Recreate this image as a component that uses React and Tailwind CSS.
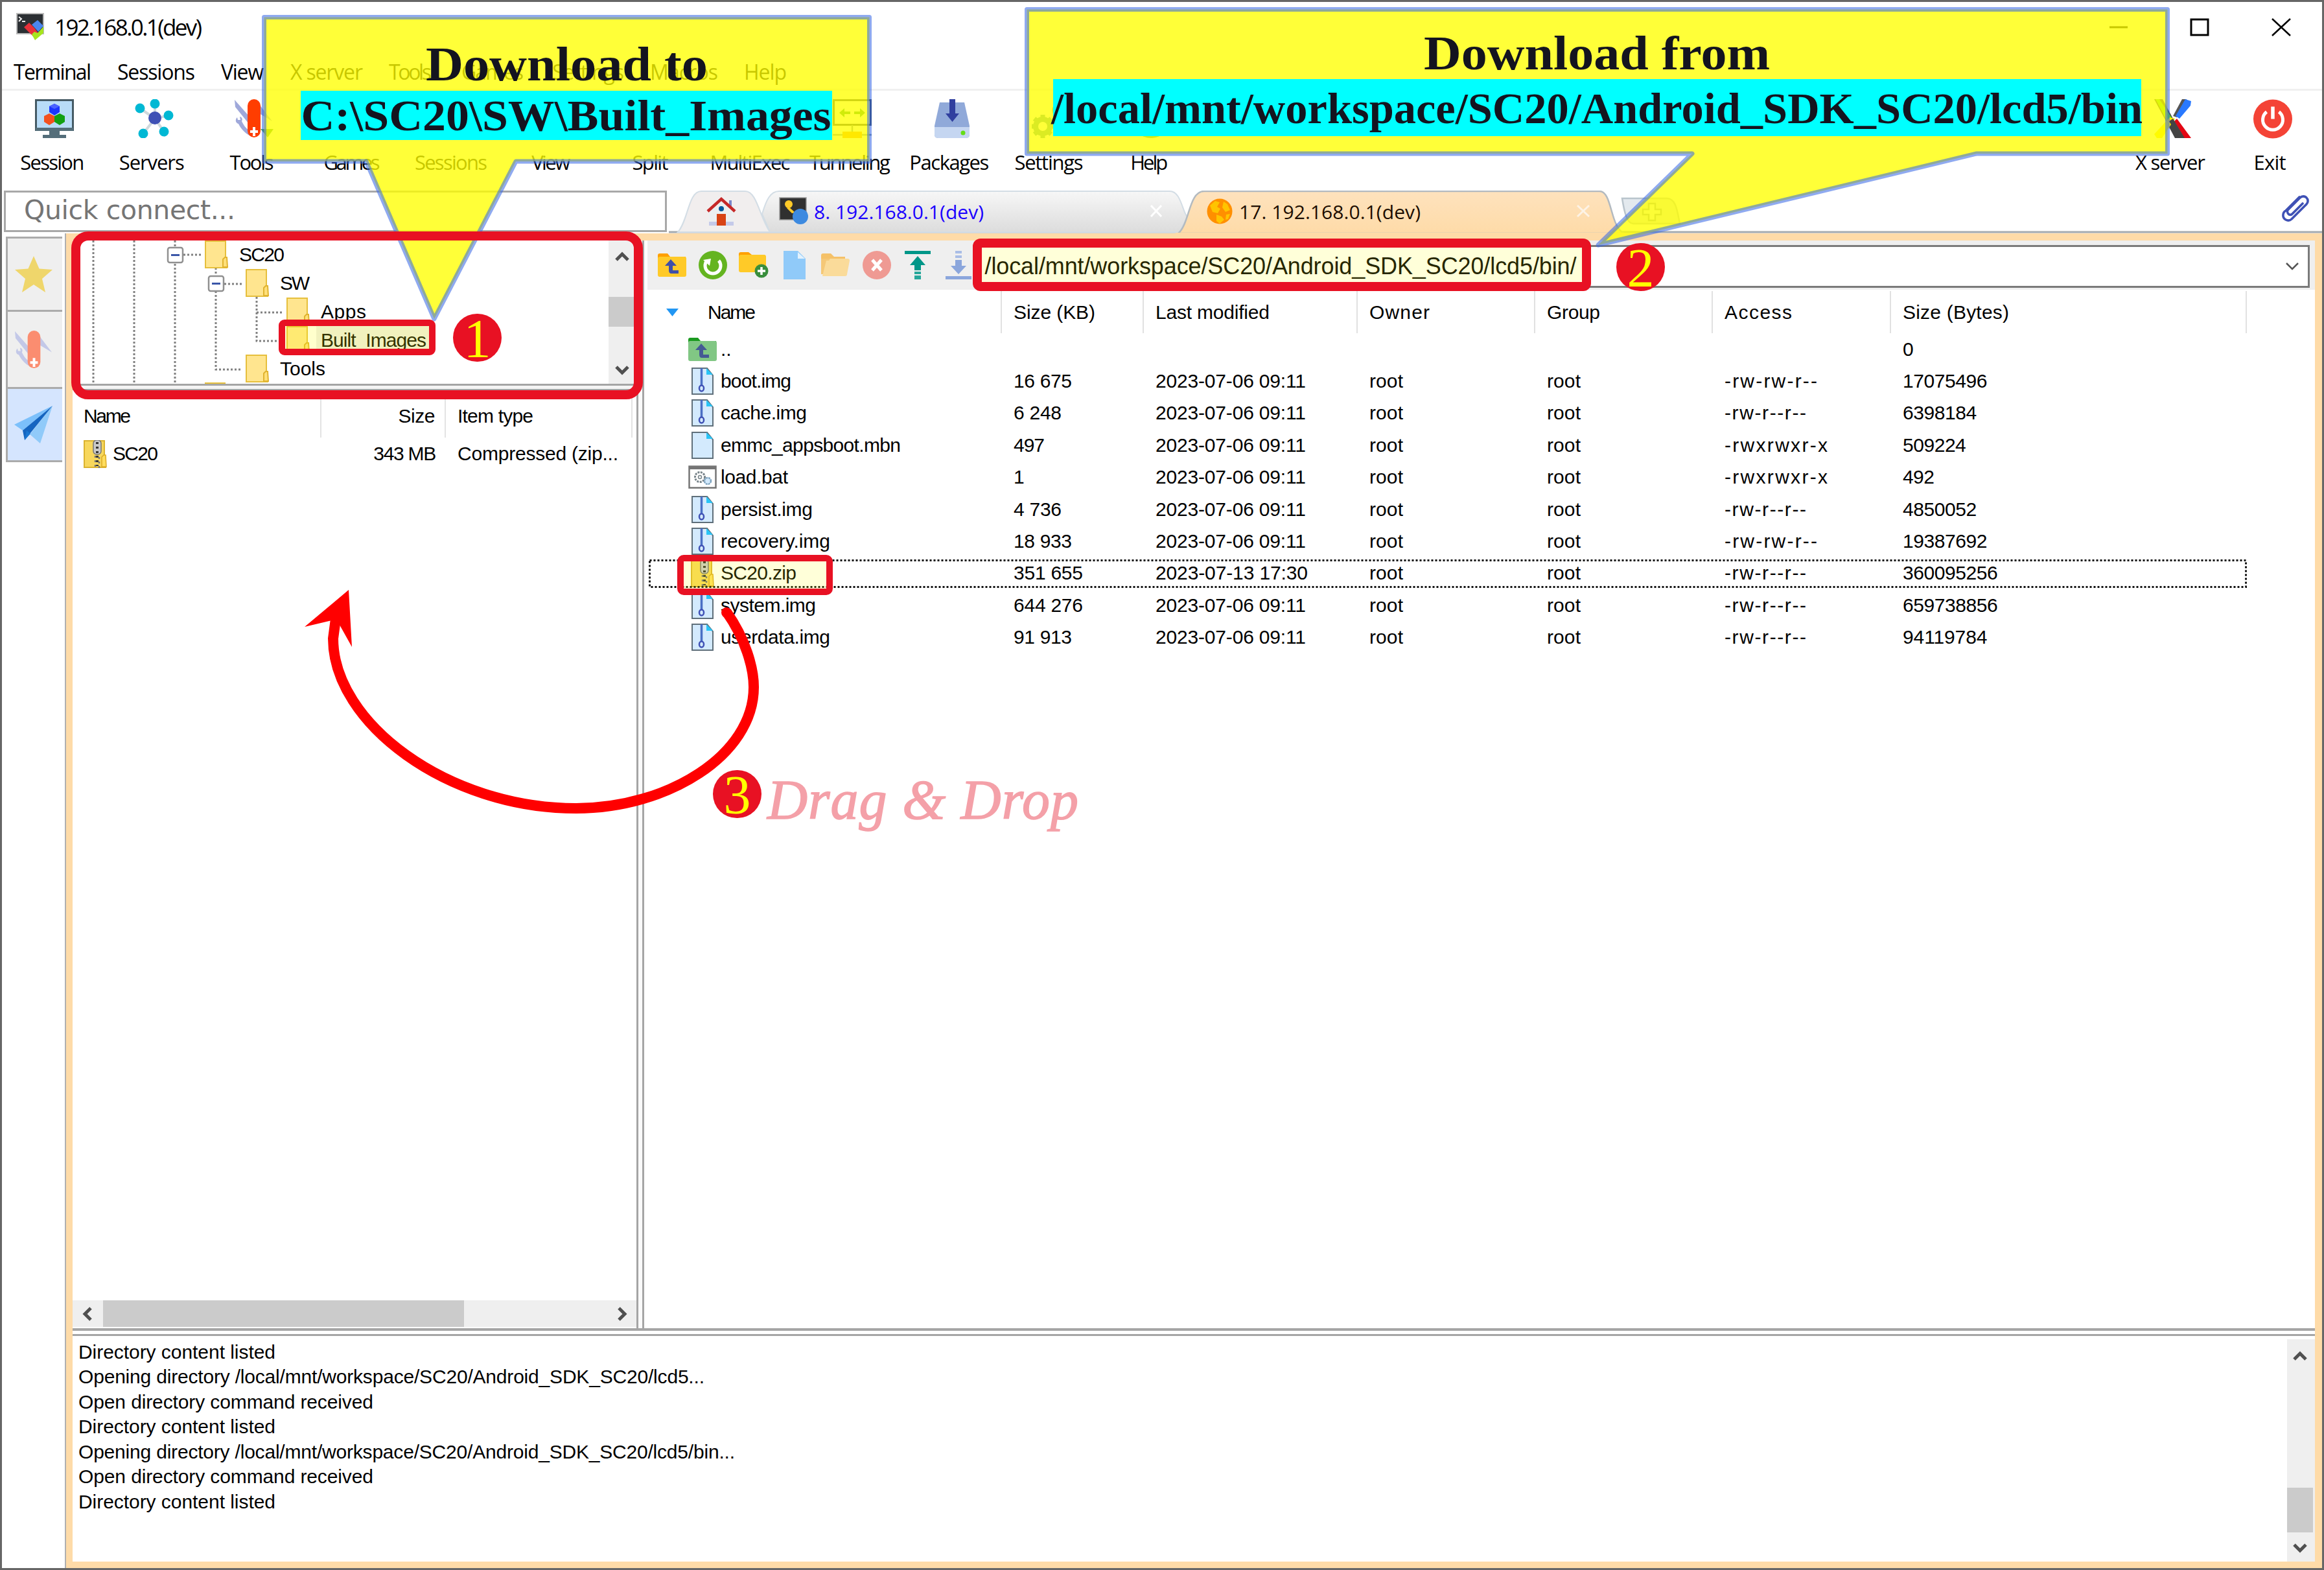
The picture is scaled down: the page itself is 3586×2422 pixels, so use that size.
import { useLayoutEffect, useRef } from "react";

const SANS = "font-['Liberation_Sans',Arial,sans-serif]";
const UI = "font-['Open_Sans','Noto_Sans',sans-serif]";
const SERIF = "font-['Liberation_Serif','Times_New_Roman',serif]";

/* Single-line label that spans `w` pixels, by tracking or, with `stretch`, by widening the glyphs. */
function Fit({ w, stretch, className = "", children }) {
  const ref = useRef(null);
  useLayoutEffect(() => {
    const el = ref.current;
    if (!w || !el) return;
    el.style.letterSpacing = "0px";
    el.style.transform = "none";
    const natural = el.getBoundingClientRect().width;
    if (stretch) {
      el.style.transform = `scaleX(${w / natural})`;
      return;
    }
    const n = Math.max(1, el.textContent.length - 1);
    el.style.letterSpacing = `${(w - natural) / n}px`;
  }, [w, stretch, children]);
  return (
    <span ref={ref} className={`inline-block whitespace-pre ${className}`}>
      {children}
    </span>
  );
}

/* ---------- icons ---------- */

const AppIcon = () => (
  <svg width="44" height="43" viewBox="0 0 44 43">
    <rect x="1" y="1" width="41" height="31" fill="#2b2f33" stroke="#b9b9b9" strokeWidth="2" />
    <path d="M4 6l4 3-4 4M9 13h5" stroke="#eee" strokeWidth="2" fill="none" />
    <path d="M12 22l8-7 8 8 6 8-6 7z" fill="#e8303a" />
    <path d="M24 18l9-7 9 9-8 9z" fill="#4a86ee" />
    <path d="M42 21v10L29 42l-5-9 4-4 5 2z" fill="#a6e51e" />
  </svg>
);

const SessionIcon = () => (
  <svg width="60" height="60" viewBox="0 0 60 60">
    <rect x="1.5" y="1.5" width="57" height="46" fill="#b8dcf7" stroke="#455a64" strokeWidth="3" />
    <path d="M1 44h58v5H1z" fill="#546e7a" />
    <path d="M22 49h16v6H22zM12 55h36v5H12z" fill="#546e7a" />
    <path d="M30 7l8 4v9l-8 5-8-5v-9z" fill="#1a35ff" />
    <path d="M22 22l8 4v9l-8 5-8-5v-9z" fill="#f4511e" />
    <path d="M38 22l8 4v9l-8 5-8-5v-9z" fill="#12a012" />
    <path d="M30 7l8 4-8 4-8-4z" fill="#4a63ff" />
  </svg>
);

const ServersIcon = () => (
  <svg width="60" height="60" viewBox="0 0 60 60">
    <path d="M31 30L31 8M31 30L8 14M31 30l21-5M31 30L13 53M31 30l14 20" stroke="#cfd8dc" strokeWidth="4" />
    <circle cx="31" cy="29" r="10" fill="#3f51b5" />
    <circle cx="31" cy="7" r="7.5" fill="#00b8d4" />
    <circle cx="8" cy="14" r="7.5" fill="#00b8d4" />
    <circle cx="52" cy="25" r="7.5" fill="#00b8d4" />
    <circle cx="13" cy="53" r="7.5" fill="#00b8d4" />
    <circle cx="45" cy="50" r="7.5" fill="#00b8d4" />
  </svg>
);

const KnifeIcon = ({ size = 60, red = "#ff3d00", blue = "#9fa8da" }) => (
  <svg width={size} height={size} viewBox="0 0 60 60">
    <path d="M0 1l22 25v12L1 12z" fill={blue} />
    <path d="M58 34L38 8v14z" fill={blue} />
    <path d="M4 28c-4 4-2 9 2 10 4 8 10 14 17 18v-8c-6-3-9-8-12-14 2-3 0-7-3-7l1 5-4 0z" fill={blue} />
    <path d="M40 46h20l-9 13z" fill="#4aa52e" opacity={size === 60 ? 1 : 0} />
    <rect x="20" y="0" width="20" height="59" rx="10" fill={red} />
    <path d="M28 43h4v5h4v4h-4v5h-4v-5h-4v-4h4z" fill="#fff" />
  </svg>
);

const TunnelIcon = () => (
  <svg width="60" height="60" viewBox="0 0 60 60">
    <rect x="1.5" y="1.5" width="57" height="38" fill="#fff" stroke="#37474f" strokeWidth="3" />
    <path d="M10 21l8-7v5h9v4h-9v5zM50 21l-8-7v5h-9v4h9v5z" fill="#2ea52e" />
    <path d="M30 40v14M0 55h60" stroke="#78909c" strokeWidth="2.5" />
    <rect x="15" y="50" width="30" height="10" fill="#ff9800" />
  </svg>
);

const PackagesIcon = () => (
  <svg width="60" height="60" viewBox="0 0 60 60">
    <path d="M11 5h38l8 36v14a5 5 0 01-5 5H8a5 5 0 01-5-5V41z" fill="#90a9d9" />
    <path d="M3 43h54v12a5 5 0 01-5 5H8a5 5 0 01-5-5z" fill="#c5d6f1" />
    <path d="M26 0h9v22h6L30.500 35 20 22h6z" fill="#303f9f" />
    <circle cx="47" cy="52" r="3.500" fill="#64dd17" />
  </svg>
);

const GearIcon = () => (
  <svg width="60" height="60" viewBox="0 0 60 60">
    <circle cx="17" cy="42" r="11" fill="none" stroke="#5aa5a0" strokeWidth="8" />
    <path d="M17 24v7M17 53v7M0 42h6M28 42h6M4 30l5 4M25 50l5 4M30 30l-5 4M9 50l-5 4" stroke="#5aa5a0" strokeWidth="7" />
    <circle cx="44" cy="17" r="9" fill="none" stroke="#607d8b" strokeWidth="7" />
  </svg>
);

const HelpIcon = () => (
  <svg width="60" height="60" viewBox="0 0 60 60">
    <circle cx="30" cy="30" r="30" fill="#43a047" />
  </svg>
);

const XServerIcon = () => (
  <svg width="60" height="60" viewBox="0 0 60 60">
    <path d="M1 0h13l32 60H33z" fill="#444" />
    <path d="M3 0h6l20 30-7 6z" fill="#64dd17" />
    <path d="M33 30l-8-2-24 26 4 6h8z" fill="#ffeb00" />
    <path d="M44 0h7L36 28l-6-2z" fill="#555" />
    <path d="M49 0l9 3-1 7-17 20-6-4z" fill="#2979ff" />
    <path d="M36 30l22 30H47L32 34z" fill="#e30613" />
    <path d="M30 30l18 30h-9L24 34z" fill="#444" />
  </svg>
);

const ExitIcon = () => (
  <svg width="61" height="61" viewBox="0 0 60 60">
    <circle cx="30" cy="30" r="30" fill="#f44336" />
    <path d="M20.500 19a15.500 15.500 0 1019 0" fill="none" stroke="#fff" strokeWidth="5" />
    <path d="M30 11v19" stroke="#fff" strokeWidth="5.500" />
  </svg>
);

const HomeIcon = () => (
  <svg width="46" height="46" viewBox="0 0 46 46">
    <path d="M35 6h4v14h-4z" fill="#7986cb" />
    <path d="M4 22L23 4l19 18v22H4z" fill="#eceff1" />
    <path d="M4 39h38v6H4z" fill="#c5cae9" />
    <path d="M2 23L23 4l21 19" stroke="#c62828" strokeWidth="4.500" fill="none" />
    <circle cx="23" cy="19" r="4" fill="#01579b" />
    <rect x="16" y="27" width="14" height="18" fill="#d84315" />
  </svg>
);

const KeyTermIcon = () => (
  <svg width="46" height="44" viewBox="0 0 46 44">
    <rect x="1" y="1" width="41" height="34" fill="#303030" stroke="#999" strokeWidth="1.500" />
    <circle cx="15" cy="11" r="6" fill="#ffca28" />
    <path d="M15 15l10 9-5 1-8-8z" fill="#ffca28" />
    <circle cx="33" cy="30" r="12" fill="#3d8ae0" />
  </svg>
);

const GlobeIcon = () => (
  <svg width="40" height="42" viewBox="0 0 40 42">
    <circle cx="20" cy="21" r="19.500" fill="#ff8f00" />
    <path d="M5 12l8-7 7 2-4 7 5 3-4 7-8-2zM15 26l8 3 4 5-7 6-5-4zM26 6l6 4 4 9-7 3-5-7zM30 26l6-1-3 8-4 1z" fill="#ffc400" />
  </svg>
);

const ClipIcon = () => (
  <svg width="48" height="48" viewBox="0 0 48 48">
    <path
      d="M30 6L9 27a8 8 0 000 14 8 8 0 009-1L41 17a7 7 0 000-10 7 7 0 00-10 0L13 25a5 5 0 000 7 4 4 0 006 0l16-16"
      fill="none" stroke="#3f51b5" strokeWidth="3.600" strokeLinecap="round"
    />
  </svg>
);

const StarIcon = () => (
  <svg width="60" height="60" viewBox="0 0 60 60">
    <path d="M30 2l8.500 19.500L59 23 43 37l5 21-18-12-18 12 5-21L1 23l20.500-1.500z" fill="#efd66b" />
  </svg>
);

const PlaneIcon = () => (
  <svg width="60" height="60" viewBox="0 0 60 60">
    <path d="M59 1L0 30l13 9z" fill="#7cc0fb" />
    <path d="M59 1L24 45l16 14z" fill="#90caf9" />
    <path d="M59 1L13 39l3 15z" fill="#1565c0" />
    <path d="M16 54l9-10-6-5z" fill="#1976d2" />
  </svg>
);

const Folder = () => (
  <svg width="36" height="43" viewBox="0 0 36 43" className="shrink-0">
    <path d="M1 1h31v26h2v15H1z" fill="#ffe58f" stroke="#e6bf3c" strokeWidth="2" />
    <path d="M28 41V29l3-3h3l1 15z" fill="#ffe07a" stroke="#e0b32f" strokeWidth="2" />
  </svg>
);

const ZipFolder = () => (
  <svg width="36" height="43" viewBox="0 0 36 43" className="shrink-0">
    <path d="M1 1h31v26h2v15H1z" fill="#f7d75c" stroke="#dbb32f" strokeWidth="2" />
    <path d="M28 41V26l3-3h3l1 18z" fill="#ffdd5e" stroke="#dbab25" strokeWidth="1.500" />
    <rect x="15" y="0" width="12" height="22" rx="5" fill="#c9c9c9" stroke="#777" strokeWidth="1.500" />
    <path d="M21 3v37" stroke="#333" strokeWidth="4" strokeDasharray="3 4" />
    <path d="M18 24v19M24 26v17" stroke="#777" strokeWidth="2.500" strokeDasharray="3 4" />
  </svg>
);

const FileIcon = ({ zip }) => (
  <svg width="36" height="44" viewBox="0 0 36 44">
    <path d="M2 2h23l9 11v29H2z" fill="#d3eafd" stroke="#5f6f7a" strokeWidth="2" />
    <path d="M24 2v10h10z" fill="#29c4f6" />
    {zip && <path d="M16.500 2v26" stroke="#4a6fc4" strokeWidth="3.500" />}
    {zip && <ellipse cx="16.500" cy="33" rx="3.500" ry="4.500" fill="none" stroke="#3f51b5" strokeWidth="2.500" />}
  </svg>
);

const BatIcon = () => (
  <svg width="44" height="36" viewBox="0 0 44 36">
    <rect x="1.500" y="1.500" width="41" height="33" fill="#fff" stroke="#757575" strokeWidth="2.500" />
    <path d="M1 1h42v5H1z" fill="#757575" />
    <circle cx="18" cy="18" r="7.500" fill="none" stroke="#78848a" strokeWidth="3" strokeDasharray="3 1.500" />
    <circle cx="18" cy="18" r="2.500" fill="none" stroke="#78848a" strokeWidth="1.500" />
    <circle cx="30" cy="24" r="5" fill="#d3eafd" stroke="#7fa4c0" strokeWidth="2.500" strokeDasharray="3 1" />
  </svg>
);

const UpFolder = ({ body, tab, arrow = "#3f4fa8" }) => (
  <svg width="44" height="38" viewBox="0 0 44 38">
    <path d="M0 4q0-3 3-3h12l4 5h24v8H0z" fill={tab} />
    <rect x="0" y="6" width="44" height="31" rx="3" fill={body} />
    <path d="M20 10l9 10h-6v7h9v5H21q-4 0-4-5v-7h-6z" fill={arrow} />
  </svg>
);

const toolIcons = [
  <UpFolder body="#ffca28" tab="#ffa000" />,
  <svg width="44" height="44" viewBox="0 0 44 44">
    <circle cx="22" cy="22" r="22" fill="#64b420" />
    <path d="M13 15a12 12 0 1018 0" fill="none" stroke="#fff" strokeWidth="5" />
    <path d="M7 14l12-2-2 11z" fill="#fff" />
  </svg>,
  <svg width="46" height="40" viewBox="0 0 46 40">
    <path d="M0 3q0-3 3-3h12l5 4h20v10H0z" fill="#ffa000" />
    <rect x="0" y="4" width="42" height="27" rx="3" fill="#ffca28" />
    <circle cx="35" cy="29" r="10.500" fill="#388e3c" />
    <path d="M35 23v12M29 29h12" stroke="#fff" strokeWidth="3.500" />
  </svg>,
  <svg width="36" height="44" viewBox="0 0 36 44">
    <path d="M1 0h22l12 12v32H1z" fill="#90caf9" />
    <path d="M23 2v10h11z" fill="#e3f2fd" />
  </svg>,
  <svg width="46" height="36" viewBox="0 0 46 36">
    <path d="M1 3q0-3 3-3h12l5 5h17v10H1z" fill="#f5c168" />
    <path d="M1 8h38v24H1z" fill="#f5c877" />
    <path d="M9 11h4l2-3h27q3 0 3 3l-4 21q0 3-3 3H3z" fill="#fadb9a" />
  </svg>,
  <svg width="44" height="44" viewBox="0 0 44 44">
    <circle cx="22" cy="22" r="22" fill="#ef9a93" />
    <path d="M15 14l14 16M29 14L15 30" stroke="#fff" strokeWidth="5" />
  </svg>,
  <svg width="40" height="44" viewBox="0 0 40 44">
    <path d="M0 0h40v5H0z" fill="#009688" />
    <path d="M20 8l12 14h-7v8H15v-8H8z" fill="#009688" />
    <path d="M15 32h10v4H15zM15 38h10v6H15z" fill="#26a69a" />
  </svg>,
  <svg width="40" height="44" viewBox="0 0 40 44">
    <path d="M0 39h40v5H0z" fill="#8ba6dc" />
    <path d="M20 36L8 23h7v-9h10v9h7z" fill="#8ba6dc" />
    <path d="M15 0h10v4H15zM15 7h10v4H15z" fill="#a9bde6" />
  </svg>,
];

const Chevron = ({ className = "", thin }) => (
  <svg width="22" height="16" viewBox="0 0 22 16" className={className}>
    <path d="M2 13L11 4l9 9" fill="none" stroke={thin ? "#555" : "#505050"} strokeWidth={thin ? 2.5 : 5} />
  </svg>
);

/* ---------- data ---------- */

const menus = [
  ["Terminal", 120, "w-[160px]"],
  ["Sessions", 120, "w-[160px]"],
  ["View", 66, "w-[107px]"],
  ["X server", 112, "w-[152px]"],
  ["Tools", 66, "w-[112px]"],
  ["Games", 96, "w-[140px]"],
  ["Settings", 111, "w-[151px]"],
  ["Macros", 105, "w-[145px]"],
  ["Help", 66, "w-[120px]"],
];

const tools = [
  ["Session", 99, <SessionIcon />],
  ["Servers", 101, <ServersIcon />],
  ["Tools", 68, <KnifeIcon />],
  ["Games", 87, null],
  ["Sessions", 112, null],
  ["View", 60, null],
  ["Split", 56, null],
  ["MultiExec", 124, null],
  ["Tunneling", 125, <TunnelIcon />],
  ["Packages", 123, <PackagesIcon />],
  ["Settings", 106, <GearIcon />],
  ["Help", 58, <HelpIcon />],
];

const files = [
  ["boot.img", 109, "16 675", 90, "2023-07-06 09:11", "-rw-rw-r--", 143, "17075496", "zip"],
  ["cache.img", 133, "6 248", 74, "2023-07-06 09:11", "-rw-r--r--", 126, "6398184", "zip"],
  ["emmc_appsboot.mbn", 278, "497", 48, "2023-07-06 09:11", "-rwxrwxr-x", 159, "509224", "file"],
  ["load.bat", 104, "1", 0, "2023-07-06 09:11", "-rwxrwxr-x", 159, "492", "bat"],
  ["persist.img", 142, "4 736", 74, "2023-07-06 09:11", "-rw-r--r--", 126, "4850052", "zip"],
  ["recovery.img", 169, "18 933", 90, "2023-07-06 09:11", "-rw-rw-r--", 143, "19387692", "zip"],
  ["SC20.zip", 117, "351 655", 107, "2023-07-13 17:30", "-rw-r--r--", 126, "360095256", "folder"],
  ["system.img", 147, "644 276", 107, "2023-07-06 09:11", "-rw-r--r--", 126, "659738856", "zip"],
  ["userdata.img", 169, "91 913", 90, "2023-07-06 09:11", "-rw-r--r--", 126, "94119784", "zip"],
];

const logLines = [
  ["Directory content listed", 304],
  ["Opening directory /local/mnt/workspace/SC20/Android_SDK_SC20/lcd5...", 966],
  ["Open directory command received", 455],
  ["Directory content listed", 304],
  ["Opening directory /local/mnt/workspace/SC20/Android_SDK_SC20/lcd5/bin...", 1013],
  ["Open directory command received", 455],
  ["Directory content listed", 304],
];

const COLS = "grid grid-cols-[547px_219px_330px_274px_274px_275px_549px]";

/* ---------- chrome ---------- */

function TitleBar() {
  return (
    <div className={`flex h-[77px] shrink-0 items-center pl-[22px] ${UI}`}>
      <AppIcon />
      <Fit w={228} className="ml-[15px] text-[35px] leading-[44px] text-black">192.168.0.1(dev)</Fit>
      <div className="ml-auto flex items-center gap-[96px] pr-[48px]">
        <svg width="28" height="28" viewBox="0 0 28 28"><path d="M0 14h28" stroke="#000" strokeWidth="3" /></svg>
        <svg width="30" height="28" viewBox="0 0 30 28"><rect x="2" y="2" width="26" height="24" fill="none" stroke="#000" strokeWidth="3" /></svg>
        <svg width="30" height="28" viewBox="0 0 30 28"><path d="M1 1l28 26M29 1L1 27" stroke="#000" strokeWidth="2.500" /></svg>
      </div>
    </div>
  );
}

function ToolButton({ label, w, icon }) {
  return (
    <div className="flex w-[153.800px] shrink-0 flex-col items-center">
      <div className="ml-[9px] flex h-[60px] w-[60px] items-center justify-center">{icon}</div>
      <Fit w={w} className="mt-[15px] text-[31px] leading-[44px]">{label}</Fit>
    </div>
  );
}

function TabBar() {
  return (
    <div className="relative flex h-[66px] shrink-0 items-start">
      <div className="ml-[3px] flex h-[64px] w-[1023px] items-center border-[3px] border-[#a8a8a8] bg-white pb-[4px] pl-[28px]">
        <Fit w={326} className="font-['DejaVu_Sans',Verdana,sans-serif] text-[41px] leading-[50px] text-[#757575]">Quick connect...</Fit>
      </div>
      <svg width="2554" height="66" viewBox="0 0 2554 66" className="absolute left-[1029px] top-0">
        <defs>
          <linearGradient id="idle" x1="0" y1="0" x2="0" y2="1">
            <stop offset="0" stopColor="#f7f7f7" />
            <stop offset="1" stopColor="#dcdcdc" />
          </linearGradient>
          <linearGradient id="active" x1="0" y1="0" x2="0" y2="1">
            <stop offset="0" stopColor="#fee2bd" />
            <stop offset="1" stopColor="#fedba8" />
          </linearGradient>
        </defs>
        <g transform="translate(-1032 -294)">
          <path d="M1032 358H3583" stroke="#a3a9ae" strokeWidth="3" />
          <path d="M1046 358C1062 340 1062 295 1082 295H1150C1168 295 1172 335 1188 358z" fill="#f1eeee" stroke="#d3dde5" strokeWidth="2" />
          <path d="M1188 358L1176 330C1182 310 1188 295 1202 295H1805C1822 295 1824 325 1832 335L1820 358z" fill="url(#idle)" stroke="#d3dde5" strokeWidth="2" />
          <path d="M1818 360C1836 345 1834 295 1858 295H2468C2488 295 2484 350 2506 360z" fill="url(#active)" stroke="#b3bac0" strokeWidth="2.500" />
          <path d="M1814 359H2510V362H1814z" fill="#fedba8" />
          <path d="M2503 306H2572C2586 306 2588 325 2592 345H2520C2510 345 2506 325 2503 306z" fill="#e3e9ee" stroke="#b9c4cc" strokeWidth="2.500" />
          <path d="M2544 314h10v9h9v8h-9v9h-10v-9h-9v-8h9z" fill="#f2f4f6" stroke="#9aa7b2" strokeWidth="2.500" />
          <path d="M1776 317l16 17M1792 317l-16 17" stroke="#fff" strokeWidth="3" />
          <path d="M2434 317l18 17M2452 317l-18 17" stroke="#fdf3e6" strokeWidth="3" />
        </g>
      </svg>
      <div className={`relative flex h-[64px] flex-1 items-center ${UI} text-[30px]`}>
        <div className="ml-[61px] w-[46px]"><HomeIcon /></div>
        <div className="ml-[66px] flex w-[660px] items-center gap-[8px] text-[#1a00ff]">
          <KeyTermIcon />
          <Fit w={262} className="pt-px leading-[44px]">8. 192.168.0.1(dev)</Fit>
        </div>
        <div className="flex items-center gap-[10px] text-[#1c0d00]">
          <GlobeIcon />
          <Fit w={280} className="pt-px leading-[44px]">17. 192.168.0.1(dev)</Fit>
        </div>
        <div className="ml-auto mr-[17px] mt-[-8px]"><ClipIcon /></div>
      </div>
    </div>
  );
}

function SideBar() {
  return (
    <div className="flex w-[99px] shrink-0 flex-col pl-[6px] pt-[5px]">
      <div className="flex h-[116px] w-[87px] items-center justify-center border-[3px] border-r-0 border-[#ababab] bg-[#efefef] pr-[4px]"><StarIcon /></div>
      <div className="flex h-[116px] w-[87px] items-center justify-center border-l-[3px] border-[#ababab] bg-[#efefef] pr-[4px]">
        <KnifeIcon size={59} red="#fb8d70" blue="#c3c8e8" />
      </div>
      <div className="flex h-[116px] w-[87px] items-center justify-center border-[3px] border-r-0 border-[#ababab] bg-[#d5e5fe] pr-[4px]"><PlaneIcon /></div>
    </div>
  );
}

function TreeRow({ pad, label, w, selected }) {
  return (
    <div className={`flex h-[43.800px] shrink-0 items-center ${pad}`}>
      <Folder />
      <span className={`ml-[10px] flex h-full items-center px-[7px] pt-px ${selected ? "bg-[#eeeeee]" : ""}`}>
        <Fit w={w}>{label}</Fit>
      </span>
    </div>
  );
}

function LeftPanel() {
  return (
    <div className={`flex w-[870px] shrink-0 flex-col ${SANS} text-[30px] leading-[36px]`}>
      <div className="flex h-[221px] shrink-0 overflow-hidden">
        <div className="relative flex flex-1 flex-col">
          <svg width="800" height="221" viewBox="112 371 800 221" className="absolute left-0 top-0">
            <g stroke="#808080" strokeWidth="3" strokeDasharray="3 3" fill="none">
              <path d="M144 371V592M207 371V592M270 371V592M333 413V570H374M396 458V526H436M396 482H436M283 393H311M346 438H374" />
            </g>
            <g fill="#fff" stroke="#909090" strokeWidth="2.500">
              <rect x="259" y="382" width="23" height="23" rx="3" />
              <rect x="322" y="426" width="23" height="23" rx="3" />
            </g>
            <path d="M264 393.500h13M327 437.500h13" stroke="#3a56a8" strokeWidth="3" />
          </svg>
          <div className="relative flex flex-col">
            <TreeRow pad="pl-[204px]" label="SC20" w={70} />
            <TreeRow pad="pl-[267px]" label="SW" w={46} />
            <TreeRow pad="pl-[330px]" label="Apps" w={70} />
            <TreeRow pad="pl-[330px]" label="Built_Images" w={163} selected />
            <TreeRow pad="pl-[267px]" label="Tools" w={70} />
            <div className="h-[3px] w-[236px] border-r-[32px] border-[#e6bf3c]" />
          </div>
        </div>
        <div className="flex w-[43px] flex-col items-center bg-[#efefef] pr-[2px] pt-[17px]">
          <Chevron />
          <div className="mt-[54px] h-[46px] w-full bg-[#cbcbcb]" />
          <Chevron className="mt-[59px] rotate-180" />
        </div>
      </div>
      <div className="h-[10px] shrink-0 border-b-2 border-t-[3px] border-[#a5a5a5] bg-[#f4f4f4]" />
      <div className="grid h-[73px] shrink-0 grid-cols-[384px_192px_288px] items-center text-black">
        <div className="flex h-full items-center border-r-2 border-[#e3e3e3] pl-[17px] pt-[7px]"><Fit w={73}>Name</Fit></div>
        <div className="flex h-full items-center justify-end border-r-2 border-[#e3e3e3] pr-[15px] pt-[7px]"><Fit w={57}>Size</Fit></div>
        <div className="flex h-full items-center border-r-2 border-[#e3e3e3] pl-[18px] pt-[7px]"><Fit w={117}>Item type</Fit></div>
      </div>
      <div className="grid h-[48px] shrink-0 grid-cols-[384px_192px_288px] items-center pt-[2px]">
        <div className="flex items-center gap-[9px] pl-[17px]"><ZipFolder /><Fit w={70}>SC20</Fit></div>
        <div className="flex justify-end pr-[16px]"><Fit w={97}>343 MB</Fit></div>
        <div className="pl-[18px]"><Fit w={248}>Compressed (zip...</Fit></div>
      </div>
      <div className="flex-1" />
      <div className="mb-[2px] flex h-[41px] shrink-0 items-center bg-[#efefef]">
        <div className="flex w-[47px] justify-center pr-[2px]"><Chevron className="-rotate-90" /></div>
        <div className="h-full w-[557px] bg-[#cbcbcb]" />
        <div className="ml-auto mr-[11px]"><Chevron className="rotate-90" /></div>
      </div>
    </div>
  );
}

function HeaderCell({ children, w, pad = "pl-[18px]" }) {
  return (
    <div className={`flex h-full items-center border-r-2 border-[#e1e1e1] ${pad}`}>
      <Fit w={w}>{children}</Fit>
    </div>
  );
}

function RightPanel() {
  return (
    <div className={`flex w-[2573px] shrink-0 flex-col ${SANS} text-[30px] leading-[36px]`}>
      <div className="flex h-[76px] shrink-0 items-center bg-[#efefef] pl-[6px]">
        {toolIcons.map((icon, i) => (
          <div key={i} className="flex w-[63.200px] shrink-0 justify-center">{icon}</div>
        ))}
        <div className="mt-[3px] flex h-[66px] w-[2053px] items-center border-[3px] border-[#7a7a7a] bg-white pl-[6px] pr-[13px]">
          <Fit w={913} className="text-[36px] leading-[44px]">/local/mnt/workspace/SC20/Android_SDK_SC20/lcd5/bin/</Fit>
          <Chevron thin className="ml-auto rotate-180" />
        </div>
      </div>
      <div className={`${COLS} h-[67px] shrink-0 pt-[2px]`}>
        <div className="flex h-full items-center border-r-2 border-[#e1e1e1] pl-[29px]">
          <svg width="19" height="12" viewBox="0 0 19 12"><path d="M0 0h19L9.500 12z" fill="#2196f3" /></svg>
          <Fit w={74} className="ml-[45px]">Name</Fit>
        </div>
        <HeaderCell w={126}>Size (KB)</HeaderCell>
        <HeaderCell w={176}>Last modified</HeaderCell>
        <HeaderCell w={93}>Owner</HeaderCell>
        <HeaderCell w={82}>Group</HeaderCell>
        <HeaderCell w={104}>Access</HeaderCell>
        <HeaderCell w={164}>Size (Bytes)</HeaderCell>
      </div>
      <div className={`${COLS} h-[49.400px] shrink-0 items-center`}>
        <div className="flex items-center gap-[6px] pl-[63px]">
          <UpFolder body="#81c784" tab="#1b9a20" arrow="#455a94" />
          <Fit>..</Fit>
        </div>
        <div className="col-start-7 pl-[18px]">0</div>
      </div>
      {files.map((f) => (
        <div key={f[0]} className={`${COLS} relative h-[49.400px] shrink-0 items-center`}>
          <div className="flex items-center pl-[63px]">
            <div className="mr-[6px] flex w-[44px] justify-center">
              {f[8] === "bat" ? <BatIcon /> : f[8] === "folder" ? <ZipFolder /> : <FileIcon zip={f[8] === "zip"} />}
            </div>
            <Fit w={f[1]}>{f[0]}</Fit>
          </div>
          <div className="pl-[18px]"><Fit w={f[3]}>{f[2]}</Fit></div>
          <div className="pl-[18px]"><Fit w={f[4].endsWith("30") ? 235 : 232}>{f[4]}</Fit></div>
          <div className="pl-[18px]"><Fit w={52}>root</Fit></div>
          <div className="pl-[18px]"><Fit w={52}>root</Fit></div>
          <div className="pl-[18px]"><Fit w={f[6]}>{f[5]}</Fit></div>
          <div className="pl-[18px]"><Fit w={f[7].length * 16.3}>{f[7]}</Fit></div>
          {f[8] === "folder" && (
            <svg width="2466" height="44" viewBox="0 0 2466 44" className="absolute left-[2px] top-[3px]">
              <rect x="1.500" y="1.500" width="2463" height="41" fill="none" stroke="#111" strokeWidth="3" strokeDasharray="3 3" />
            </svg>
          )}
        </div>
      ))}
    </div>
  );
}

function LogPanel() {
  return (
    <div className="flex flex-1 border-t-[3px] border-[#a5a5a5] pt-[5px]">
      <div className={`flex flex-1 flex-col pl-[9px] pt-px ${SANS} text-[30px] leading-[38.450px]`}>
        {logLines.map(([t, w], i) => (
          <div key={i} className="h-[38.450px]"><Fit w={w}>{t}</Fit></div>
        ))}
      </div>
      <div className="flex w-[43px] flex-col items-center bg-[#efefef] pr-[3px] pt-[18px]">
        <Chevron />
        <div className="mt-[195px] h-[69px] w-full bg-[#cbcbcb]" />
        <Chevron className="mt-[16px] rotate-180" />
      </div>
    </div>
  );
}

/* ---------- annotations ---------- */

function Badge({ place, n }) {
  return (
    <div className={`absolute flex h-[74px] w-[75px] items-center justify-center rounded-full bg-[#e81123] ${place} ${SERIF} text-[84px] leading-[74px] text-[#ffff00]`}>
      <span className="mt-[3px]">{n}</span>
    </div>
  );
}

function Annotations() {
  return (
    <>
      <svg width="3586" height="700" viewBox="0 0 3586 700" className="absolute left-0 top-0">
        <g fill="#ffff00" fillOpacity="0.780" stroke="#3767e4" strokeOpacity="0.560" strokeWidth="7" strokeLinejoin="round">
          <path d="M407.500 26.500H1341.500V249H796L670 492L565 249H407.500z" />
          <path d="M1584.500 14.500H3344.500V237H3050L2466 378L2611 237H1584.500z" />
        </g>
      </svg>

      <div className={`absolute left-[406px] top-[23px] flex w-[936px] flex-col items-center ${SERIF} font-bold text-[#14141f]`}>
        <Fit stretch w={435} className="mt-[36px] text-[74px] leading-[80px]">Download to</Fit>
        <div className="mt-px flex h-[76px] w-[820px] items-center justify-center bg-[#00ffff]">
          <Fit stretch w={818} className="text-[67px] leading-[76px]">C:\SC20\SW\Built_Images</Fit>
        </div>
      </div>

      <div className={`absolute left-[1583px] top-[12px] flex w-[1762px] flex-col items-center ${SERIF} font-bold text-[#14141f]`}>
        <Fit stretch w={534} className="mt-[30px] text-[74px] leading-[80px]">Download from</Fit>
        <div className="flex h-[88px] w-[1679px] items-center justify-center bg-[#00ffff] pt-[2px]">
          <Fit stretch w={1684} className="text-[67px] leading-[76px]">/local/mnt/workspace/SC20/Android_SDK_SC20/lcd5/bin</Fit>
        </div>
      </div>

      <div className="absolute left-[110px] top-[357px] h-[259px] w-[882px] rounded-[26px] border-[14px] border-[#e81123]" />
      <div className="absolute left-[430px] top-[493px] h-[55px] w-[242px] rounded-[9px] border-[10px] border-[#e81123] bg-[#ffff00]/20" />
      <div className="absolute left-[1501px] top-[368px] h-[81px] w-[954px] rounded-[12px] border-[14px] border-[#e81123] bg-[#ffff00]/15" />
      <div className="absolute left-[1045px] top-[856px] h-[62px] w-[240px] rounded-[10px] border-[10px] border-[#e81123] bg-[#ffff00]/15" />

      <Badge place="left-[699px] top-[484px]" n="1" />
      <Badge place="left-[2494px] top-[375px]" n="2" />
      <Badge place="left-[1100px] top-[1188px]" n="3" />

      <svg width="760" height="380" viewBox="440 890 760 380" className="absolute left-[440px] top-[890px]">
        <path
          d="M1121 944C1150 985 1163 1030 1163 1060C1163 1165 1030 1247 889 1247C690 1247 514 1115 514 985L518 955"
          fill="none" stroke="#ff0000" strokeWidth="16"
        />
        <circle cx="1121" cy="945" r="8" fill="#ff0000" />
        <path d="M538 910L470 967L512 957L524 964L543 998z" fill="#ff0000" />
      </svg>

      <div className={`absolute left-[1184px] top-[1184px] ${SERIF} text-[86px] italic leading-[100px] text-[#f4a0a8] [-webkit-text-stroke:1.5px_#f4a0a8]`}>
        <Fit w={480}>Drag &amp; Drop</Fit>
      </div>
    </>
  );
}

export default function App() {
  return (
    <div className="relative flex h-[2422px] w-[3586px] flex-col overflow-hidden border-[3px] border-[#666666] bg-white text-black">
      <TitleBar />
      <div className={`flex h-[60px] shrink-0 items-center border-b-[3px] border-[#f0f0f0] pl-[18px] pt-[4px] text-[32px] ${UI}`}>
        {menus.map(([t, w, cell]) => (
          <div key={t} className={cell}><Fit w={w} className="leading-[44px]">{t}</Fit></div>
        ))}
      </div>
      <div className={`flex h-[154px] shrink-0 pt-[13px] ${UI}`}>
        {tools.map(([t, w, icon]) => <ToolButton key={t} label={t} w={w} icon={icon} />)}
        <div className="ml-auto mr-1 flex">
          <ToolButton label="X server" w={108} icon={<XServerIcon />} />
          <ToolButton label="Exit" w={50} icon={<ExitIcon />} />
        </div>
      </div>
      <TabBar />
      <div className="flex min-h-0 flex-1">
        <SideBar />
        <div className="flex min-w-0 flex-1 flex-col border-b-[10px] border-l-[10px] border-r-[11px] border-t-[11px] border-[#fedba8] shadow-[-2px_0_0_#b0b0b0]">
          <div className="flex min-h-0 flex-1 flex-col bg-white">
            <div className="flex h-[1678px] shrink-0">
              <LeftPanel />
              <div className="mr-[5px] w-[12px] shrink-0 border-x-[3px] border-[#a5a5a5] bg-[#fafafa]" />
              <RightPanel />
            </div>
            <div className="h-[9px] shrink-0 border-t-[4px] border-[#a5a5a5]" />
            <LogPanel />
          </div>
        </div>
      </div>
      <div className="absolute -left-[3px] -top-[3px] h-0 w-0">
        <Annotations />
      </div>
    </div>
  );
}
